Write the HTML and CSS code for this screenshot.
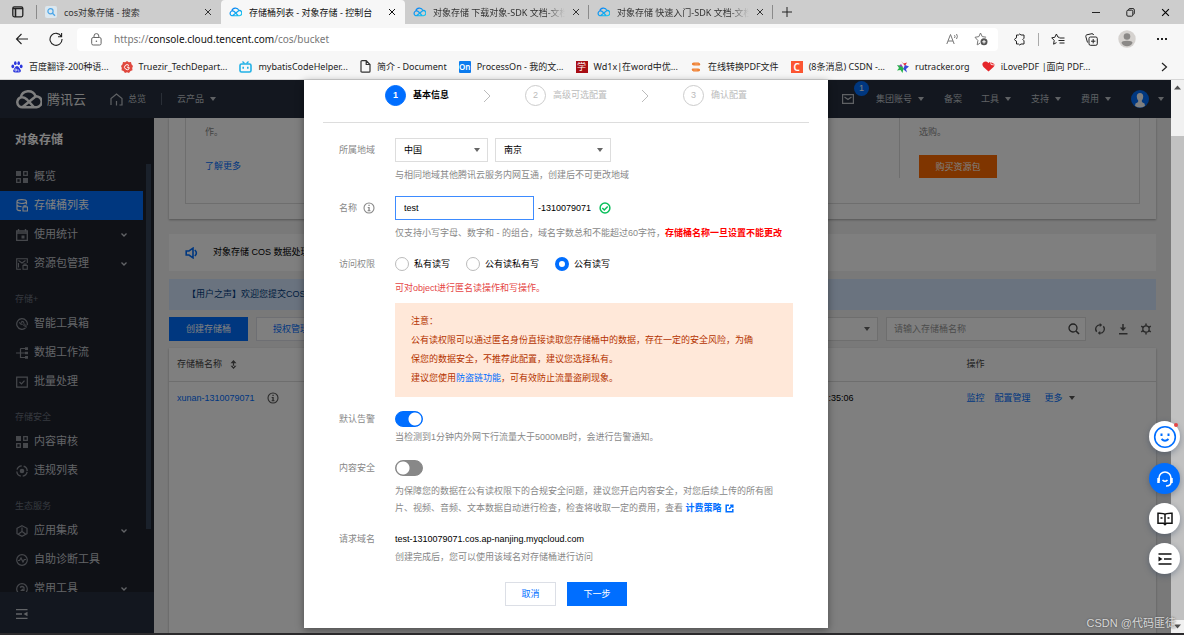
FILE: index.html
```html
<!DOCTYPE html>
<html lang="zh-CN">
<head>
<meta charset="utf-8">
<title>存储桶列表 - 对象存储 - 控制台</title>
<link rel="stylesheet" href="styles.css">
</head>
<body>
<svg class="defs" width="0" height="0" aria-hidden="true">
  <defs>
    <linearGradient id="cg" x1="0" y1="0" x2="1" y2="1"><stop offset="0" stop-color="#0a7cf5"/><stop offset="1" stop-color="#14c8ee"/></linearGradient>
    <symbol id="cloud" viewBox="0 0 26 18"><path d="M4 15.500a5 5 0 0 1 1.500-8.500a7.500 7.500 0 0 1 14.300-1.200a5 5 0 0 1 1 10.700H7a5 5 0 0 1-3-1zM6 7q3-.5 5.500 2L18 16M7 16.500 18 7.500q2-1.700 3.500-1.500" fill="none" stroke-width="2.400"/></symbol>
    <symbol id="chev" viewBox="0 0 8 8"><path d="M1.500 2.500 4 5l2.500-2.500" fill="none" stroke="currentColor" stroke-width="1.300"/></symbol>
    <symbol id="caret" viewBox="0 0 8 6"><path d="M1 1h6L4 5z" fill="currentColor"/></symbol>
    <symbol id="grid" viewBox="0 0 12 12"><path d="M0 0h5v5H0zM7 7h5v5H7z" fill="currentColor"/><path d="M7.700.7h3.600v3.600H7.700zM.7 7.700h3.600v3.600H.7z" fill="none" stroke="currentColor" stroke-width="1.300"/></symbol>
    <symbol id="info" viewBox="0 0 12 12"><circle cx="6" cy="6" r="5" fill="none" stroke="currentColor" stroke-width="1.100"/><path d="M5.400 2.700h1.300V4H5.400zM4.700 5h2v3.300h.8v.9H4.600v-.9h.8V5.900h-.7z" fill="currentColor"/></symbol>
    <symbol id="step" viewBox="0 0 8 14"><path d="m1 1 6 6-6 6" fill="none" stroke="#bbb"/></symbol>
    <symbol id="x" viewBox="0 0 8 8"><path d="m1 1 6 6M7 1 1 7" stroke="currentColor" stroke-width="1"/></symbol>
  </defs>
</svg>

<header class="browser">
  <div class="tabs">
    <button class="tab-menu" aria-label="标签页操作"><svg width="12" height="12" viewBox="0 0 12 12"><rect x=".8" y=".8" width="10" height="10" rx="1.500" fill="none" stroke="#222" stroke-width="1.300"/><path d="M1 2.500h10M3.500 3v8" stroke="#222" stroke-width="1.600"/></svg></button>
    <div class="tab">
      <svg width="12" height="12" viewBox="0 0 12 12"><rect width="12" height="12" rx="2" fill="#dbe7ef"/><circle cx="5.500" cy="5.200" r="2.600" fill="none" stroke="#4ca6e8" stroke-width="1.200"/><path d="m7.500 7.200 2.500 2.600" stroke="#4ca6e8" stroke-width="1.300"/></svg>
      <span class="tab-title">cos对象存储 - 搜索</span>
      <button aria-label="关闭"><svg width="8" height="8"><use href="#x"/></svg></button>
    </div>
    <div class="tab active">
      <svg width="13" height="10" stroke="url(#cg)"><use href="#cloud"/></svg>
      <span class="tab-title">存储桶列表 - 对象存储 - 控制台</span>
      <button aria-label="关闭"><svg width="8" height="8"><use href="#x"/></svg></button>
    </div>
    <div class="tab ruled">
      <svg width="13" height="10" stroke="url(#cg)"><use href="#cloud"/></svg>
      <span class="tab-title fade">对象存储 下载对象-SDK 文档-文档</span>
      <button aria-label="关闭"><svg width="8" height="8"><use href="#x"/></svg></button>
    </div>
    <div class="tab ruled">
      <svg width="13" height="10" stroke="url(#cg)"><use href="#cloud"/></svg>
      <span class="tab-title fade">对象存储 快速入门-SDK 文档-文档</span>
      <button aria-label="关闭"><svg width="8" height="8"><use href="#x"/></svg></button>
    </div>
    <button class="new-tab" aria-label="新标签页"><svg width="12" height="12" viewBox="0 0 12 12"><path d="M6 1v10M1 6h10" stroke="#222"/></svg></button>
    <div class="window-buttons">
      <button aria-label="最小化"><svg width="9" height="9" viewBox="0 0 9 9"><path d="M1 4.500h8" stroke="#222"/></svg></button>
      <button aria-label="还原"><svg width="9" height="9" viewBox="0 0 9 9"><rect x=".8" y="2.200" width="6" height="6" rx="1.200" fill="none" stroke="#222"/><path d="M2.700 2V1q.2-.4.800-.4h3.500q1.300 0 1.300 1.300V5.500q0 .8-1 .8" fill="none" stroke="#222"/></svg></button>
      <button aria-label="关闭窗口"><svg width="9" height="9"><use href="#x"/></svg></button>
    </div>
  </div>
  <div class="toolbar">
    <button aria-label="后退"><svg width="14" height="12" viewBox="0 0 14 12"><path d="M13 6H1.500M6.500 1l-5 5 5 5" fill="none" stroke="#222" stroke-width="1.100"/></svg></button>
    <button aria-label="刷新"><svg width="14" height="14" viewBox="0 0 14 14"><path d="M12.300 4.500A6 6 0 1 0 13 7M12.600 1v3.700H9" fill="none" stroke="#222" stroke-width="1.100"/></svg></button>
    <div class="address">
      <svg width="11" height="13" viewBox="0 0 11 13"><rect x=".7" y="4.500" width="9.400" height="7.500" rx="1.500" fill="none" stroke="#666"/><path d="M3 4.500V3a2.400 2.400 0 0 1 4.800 0v1.500" fill="none" stroke="#666"/><circle cx="5.400" cy="8.200" r=".8" fill="#666"/></svg>
      <span class="url">https://<b>console.cloud.tencent.com</b>/cos/bucket</span>
      <button aria-label="大声朗读"><svg width="13" height="12" viewBox="0 0 13 12"><path d="M.8 11 4.500 1.500 8.200 11M2 8h5M8.500 2.200q1 1.300 0 2.800M10.500 1q1.800 2.400 0 5" fill="none" stroke="#777"/></svg></button>
      <button aria-label="收藏"><svg width="14" height="14" viewBox="0 0 14 14"><path d="M6.500 1 8.200 4.600l3.900.6M4 12.500l-.8.300.7-4.300L1 5.300l3.900-.7L6.500 1M4 12.500 6 11" fill="none" stroke="#777"/><circle cx="10" cy="9.800" r="3.500" fill="#555"/><path d="M10 8v3.600M8.200 9.800h3.600" stroke="#fff"/></svg></button>
    </div>
    <div class="tools">
      <button aria-label="扩展"><svg width="13" height="13" viewBox="0 0 13 13"><path d="M3.500 2h2q1.200-2 2.500 0h3v3.200q-2.400 1.300 0 2.600V11H8q-1.300 2-2.500 0h-2V8.200Q-.5 6.500 3.500 4.800z" fill="none" stroke="#222" stroke-linejoin="round"/></svg></button>
      <i class="rule"></i>
      <button aria-label="收藏夹"><svg width="14" height="13" viewBox="0 0 14 13"><path d="M8.500 4.300 7 4.200 5.400 1 3.800 4.300.7 4.800l2.500 2.600-.6 3.800L5.500 9.600M8.500 5h5M7.500 7.500h6M8.500 10h5" fill="none" stroke="#222"/></svg></button>
      <button aria-label="集锦"><svg width="13" height="13" viewBox="0 0 13 13"><rect x="4" y="4" width="8.300" height="8.300" rx="1.500" fill="none" stroke="#222"/><path d="M8.200 6v4.400M6 8.200h4.400M2.500 9.500.8 3.500q-.2-1.300 1-1.700L7 .7q1.300 0 1.600 1.300" fill="none" stroke="#222"/></svg></button>
      <button aria-label="用户"><svg width="18" height="18" viewBox="0 0 18 18"><circle cx="9" cy="9" r="8.700" fill="#d5d2cf"/><circle cx="9" cy="6.500" r="3.300" fill="#8b8987"/><path d="M3.500 13q0-2.300 5.500-2.300t5.500 2.300q-2 3.300-5.500 3.300T3.500 13z" fill="#8b8987"/></svg></button>
      <button aria-label="更多"><svg width="12" height="4" viewBox="0 0 12 4"><path d="M1 1h2v2H1zM5 1h2v2H5zM9 1h2v2H9z" fill="#222"/></svg></button>
    </div>
  </div>
  <nav class="bookmarks">
    <a href="#"><svg width="12" height="12" viewBox="0 0 12 12" fill="#2a35dc"><ellipse cx="1.800" cy="5.400" rx="1.400" ry="1.800"/><ellipse cx="4.300" cy="2.200" rx="1.300" ry="1.900"/><ellipse cx="7.700" cy="2.200" rx="1.300" ry="1.900"/><ellipse cx="10.200" cy="5.400" rx="1.400" ry="1.800"/><path d="M6 5Q4.500 5 3.500 7T2 10q.5 2 4 1.500 3.500.5 4-1.500-.2-1-1.500-3T6 5z"/><path d="M4 8h1.500v2H4zM7 8v2h1.500" fill="none" stroke="#fff" stroke-width=".6"/></svg>百度翻译-200种语...</a>
    <a href="#"><svg width="12" height="12" viewBox="0 0 12 12"><path d="m6 0 1.800 1.200L10 1l.5 2.200L12 5l-.8 2 .3 2.200-2 .8L8 12l-2-.8L4 12 2.500 10l-2-.8L.8 7 0 5l1.500-1.800L2 1l2.200.2z" fill="#e0483e"/><path d="M8 4.500Q6 2.500 4.200 4.500T4.500 8Q6.500 9.500 8 8V6.200H6" fill="none" stroke="#fff"/></svg>Truezir_TechDepart...</a>
    <a href="#"><svg width="13" height="12" viewBox="0 0 13 12"><path d="m3.500.5 2 2M9.500.5l-2 2" stroke="#21b1e6" stroke-width="1.300"/><rect x="1" y="3" width="11" height="8" rx="1.500" fill="none" stroke="#21b1e6" stroke-width="1.600"/><path d="M4.200 5.800v2M8.800 5.800v2" stroke="#21b1e6" stroke-width="1.600"/></svg>mybatisCodeHelper...</a>
    <a href="#"><svg width="11" height="13" viewBox="0 0 11 13"><path d="M1 1.500Q1 .7 2 .7h4.200L10 4.500v6.700q0 1-1 1H2q-1 0-1-1zM6.200.7v3.800H10" fill="none" stroke="#333" stroke-width="1.200"/></svg>简介 - Document</a>
    <a href="#"><span class="fav fav-on">On</span>ProcessOn - 我的文...</a>
    <a href="#"><span class="fav fav-xue">学</span>Wd1x|在word中优...</a>
    <a href="#"><svg width="12" height="12" viewBox="0 0 12 12"><path d="M9.800 4H4q-1.800 0-1.800-1Q2.200 2 4 2h4.500q1.300 0 1.300 2zM2.200 8H8q1.800 0 1.800 1Q9.800 10 8 10H3.500q-1.300 0-1.300-2z" fill="#ef7d2c" stroke="#ef7d2c" stroke-linejoin="round"/><path d="M4.500 3h4M3.500 9h4" stroke="#f9b98c" stroke-width=".7"/></svg>在线转换PDF文件</a>
    <a href="#"><span class="fav fav-c">C</span>(8条消息) CSDN -...</a>
    <a href="#"><svg width="12" height="12" viewBox="0 0 12 12"><path d="m4 0 2.500 2.500L10 1.500 8 5z" fill="#e5303c"/><path d="m8 4 4 1.500-3 2.500 1 3.500L6 8z" fill="#3b49d8"/><path d="M6.500 7.500 5.500 12 3.500 9 0 9.500 2 7 0 4l5 1z" fill="#27b34b"/><path d="M4 3 6 6 2 5z" fill="#9d37b4"/></svg>rutracker.org</a>
    <a href="#"><svg width="13" height="11" viewBox="0 0 13 11"><path d="M6.500 10.500 1.500 6Q-.8 3 1.500 1.200 4-.3 6.500 2L8 .8 12.300 3q.7 1.700-.8 3z" fill="#e5262a"/><path d="m8.500 0 .5 3.500 3.500.5" fill="none" stroke="#fff" stroke-width=".8"/></svg>iLovePDF |面向 PDF...</a>
    <button class="more" aria-label="更多书签"><svg width="7" height="10" viewBox="0 0 7 10"><path d="m1 1 4.500 4L1 9" fill="none" stroke="#222" stroke-width="1.200"/></svg></button>
  </nav>
</header>

<div class="viewport">
  <div class="page">
    <header class="topnav">
      <svg class="brand-mark" width="27" height="19" stroke="#fff"><use href="#cloud"/></svg>
      <strong class="brand">腾讯云</strong>
      <a class="home" href="#"><svg width="13" height="13" viewBox="0 0 13 13"><path d="M1 12V5.500L6.500 1 12 5.500V12H9.500M6.500 8v4.500" fill="none" stroke="currentColor" stroke-width="1.200"/></svg>总览</a>
      <i class="rule"></i>
      <a class="products" href="#">云产品<svg width="8" height="6"><use href="#caret"/></svg></a>
      <nav class="account">
        <a class="mail" href="#" aria-label="消息"><svg width="12" height="10" viewBox="0 0 12 10"><path d="M.6.600h10.800v8.800H.6zM2.500 3 6 5.500 9.500 3" fill="none" stroke="currentColor" stroke-width="1.200"/></svg><span class="badge">1</span></a>
        <a href="#">集团账号<svg width="8" height="6"><use href="#caret"/></svg></a>
        <a href="#">备案</a>
        <a href="#">工具<svg width="8" height="6"><use href="#caret"/></svg></a>
        <a href="#">支持<svg width="8" height="6"><use href="#caret"/></svg></a>
        <a href="#">费用<svg width="8" height="6"><use href="#caret"/></svg></a>
        <a class="me" href="#" aria-label="账号"><svg width="18" height="18" viewBox="0 0 18 18"><circle cx="9" cy="9" r="9" fill="#006eff"/><path d="M9 3Q5.500 3.200 5.800 7q.2 2.500 1.600 4Q7 12.500 4.500 13.500L4 16q5 3 10 0l-.5-2.500Q11 12.500 10.600 11q1.400-1.500 1.600-4Q12.500 3.200 9 3z" fill="#fff"/></svg><svg width="8" height="6"><use href="#caret"/></svg></a>
      </nav>
    </header>
    <div class="body">
      <aside class="sidebar">
        <h2>对象存储</h2>
        <div class="menu">
          <nav>
            <a href="#"><svg width="12" height="12"><use href="#grid"/></svg>概览</a>
            <a class="current" href="#"><svg width="12" height="13" viewBox="0 0 12 13"><path d="M10.500 5.500V2.500q0-1.800-4.700-1.800T1 2.500v7.700q0 1.300 4 1.500M1 2.800q1 1.700 4.800 1.700t4.700-1.700M1 6.200q1 1.500 4.500 1.500" fill="none" stroke="currentColor" stroke-width="1.200"/><path d="M7 8h4.500v4H7zM8 8V6.700h2V8" fill="none" stroke="currentColor" stroke-width="1.100"/></svg>存储桶列表</a>
            <a href="#"><svg width="12" height="12" viewBox="0 0 12 12"><path d="M.7 2h10.600v9.300H.7zM.7 4h10.600" fill="none" stroke="currentColor" stroke-width="1.300"/><path d="M2.500 0v2.500M9.500 0v2.500" stroke="currentColor" stroke-width="1.400"/><path d="M5.500 6.500h3v3h-3z" fill="currentColor"/></svg>使用统计<svg class="down" width="8" height="8"><use href="#chev"/></svg></a>
            <a href="#"><svg width="12" height="12" viewBox="0 0 12 12"><path d="M5 11.300H.7V.7h10.600V5M2.500 2.500 6 5l3.500-2.500M2.500 5v4.500M7 7.500h4.300v3.800H7zM8 7.500V6h2v1.500" fill="none" stroke="currentColor" stroke-width="1.100"/></svg>资源包管理<svg class="down" width="8" height="8"><use href="#chev"/></svg></a>
          </nav>
          <h3>存储+</h3>
          <nav>
            <a href="#"><svg width="12" height="12" viewBox="0 0 12 12"><path d="M9.500 10A5.300 5.300 0 1 1 11.200 7.200" fill="none" stroke="currentColor" stroke-width="1.200"/><path d="m10.500 9.500-4-3.200Q4 7 3.500 4.500l1.300.8L6 4.500l-.3-1.300Q8.500 3 7.800 5.500L11 8.500" fill="none" stroke="currentColor"/></svg>智能工具箱</a>
            <a href="#"><svg width="12" height="12" viewBox="0 0 12 12"><path d="M0 6h9M4.500 1.500V10.500H9M4.500 1.500H9" fill="none" stroke="currentColor" stroke-width="1.200"/><path d="M9 .3h3v2.600H9zM9 4.700h3v2.600H9zM9 9.100h3v2.600H9z" fill="currentColor"/></svg>数据工作流</a>
            <a href="#"><svg width="12" height="12" viewBox="0 0 12 12"><path d="M.7 1.200h10.600v10H.7zM3.500 6l2 2 3-3.300" fill="none" stroke="currentColor" stroke-width="1.200"/></svg>批量处理</a>
          </nav>
          <h3>存储安全</h3>
          <nav>
            <a href="#"><svg width="12" height="12"><use href="#grid"/></svg>内容审核</a>
            <a href="#"><svg width="12" height="12" viewBox="0 0 12 12"><circle cx="6" cy="6" r="5.200" fill="none" stroke="currentColor" stroke-width="1.300" stroke-dasharray="6.200 2" stroke-dashoffset="-1"/><circle cx="6" cy="6" r="2.300" fill="currentColor"/></svg>违规列表</a>
          </nav>
          <h3>生态服务</h3>
          <nav>
            <a href="#"><svg width="12" height="12" viewBox="0 0 12 12"><path d="m6 .7 5 2.600v5.400l-5 2.600-5-2.600V3.300zM6 2.500V6.500L2.500 9M6 6.500 9.500 9" fill="none" stroke="currentColor" stroke-width="1.200"/></svg>应用集成<svg class="down" width="8" height="8"><use href="#chev"/></svg></a>
            <a href="#"><svg width="12" height="12" viewBox="0 0 12 12"><circle cx="6" cy="6" r="5.300" fill="none" stroke="currentColor" stroke-width="1.200"/><path d="M2 6.500h1.500L5 4l2 4 1.300-2.500H10" fill="none" stroke="currentColor" stroke-width="1.200"/></svg>自助诊断工具</a>
            <a href="#"><svg width="12" height="12" viewBox="0 0 12 12"><circle cx="6" cy="6" r="5.300" fill="none" stroke="currentColor" stroke-width="1.200"/><path d="M4 4.500q2-2 4 0v3H5.500L7 6" fill="none" stroke="currentColor" stroke-width="1.200"/></svg>常用工具<svg class="down" width="8" height="8"><use href="#chev"/></svg></a>
          </nav>
        </div>
        <footer><button aria-label="收起菜单"><svg width="12" height="10" viewBox="0 0 12 10"><path d="M0 .7h11.500M0 5h6M0 9.300h11.500" stroke="currentColor" stroke-width="1.300"/><path d="M11.500 2.700v4.600L7.500 5z" fill="currentColor"/></svg></button></footer>
      </aside>
      <main class="content">
        <section class="intro card">
          <div class="intro-inner">
            <div class="intro-col first"><p>如，您可通过控制台、<br>作。</p><a href="#">了解更多</a></div>
            <div class="intro-col usage"><p>的使用状态，<br>&nbsp;</p></div>
            <div class="intro-col last"><p>套餐，购买量身资费更优惠，可以根据实际需求<br>选购。</p><button class="buy">购买资源包</button></div>
          </div>
        </section>
        <section class="announce"><svg width="14" height="12" viewBox="0 0 14 12"><path d="M1.200 4H4l4-2.800v9.600L4 8H1.200z" fill="none" stroke="#006eff" stroke-width="1.600"/><path d="M9.800 3q3.200 3 0 6" fill="none" stroke="#006eff" stroke-width="1.600"/></svg>对象存储 COS 数据处理</section>
        <section class="voice">【用户之声】欢迎您提交COS</section>
        <div class="actions">
          <button class="primary">创建存储桶</button>
          <button class="plain">授权管理</button>
          <div class="filter"><select aria-label="筛选"><option></option></select><svg width="8" height="6"><use href="#caret"/></svg></div>
          <div class="search"><input type="text" aria-label="搜索" placeholder="请输入存储桶名称"><svg width="12" height="12" viewBox="0 0 12 12"><circle cx="5" cy="5" r="4" fill="none" stroke="currentColor" stroke-width="1.300"/><path d="m8 8 3 3" stroke="currentColor" stroke-width="1.600"/></svg></div>
          <div class="icon-buttons">
            <button aria-label="刷新"><svg width="12" height="12" viewBox="0 0 12 12"><path d="M2.700 8.800A4.200 4.200 0 0 1 6.500 1.900M9.300 3.200a4.200 4.200 0 0 1-3.800 6.900" fill="none" stroke="currentColor" stroke-width="1.300"/><path d="M5.800 0 8.200 2 5.800 4zM6.200 8 3.800 10l2.400 2z" fill="currentColor"/></svg></button>
            <button aria-label="下载"><svg width="10" height="12" viewBox="0 0 10 12"><path d="M5 1v5M1 10.700h8.500" stroke="currentColor" stroke-width="1.500"/><path d="M1.800 4.500h6.400L5 8z" fill="currentColor"/></svg></button>
            <button aria-label="设置"><svg width="12" height="12" viewBox="0 0 12 12"><circle cx="6" cy="6" r="3.200" fill="none" stroke="currentColor" stroke-width="1.300"/><path d="M6 .5v2.300M6 9.200v2.300M1.200 3.200l2 1.200M8.800 7.600l2 1.200M1.200 8.800l2-1.200M8.800 4.400l2-1.200" stroke="currentColor" stroke-width="1.500"/></svg></button>
          </div>
        </div>
        <section class="card buckets">
          <table>
            <thead><tr><th class="c-name">存储桶名称<svg width="7" height="9" viewBox="0 0 7 9"><path d="M3.500 0 6.500 3.300h-6zM3.500 9l3-3.300h-6zM2.900 2h1.200v5H2.900z" fill="currentColor"/></svg></th><th class="c-time"></th><th>操作</th></tr></thead>
            <tbody><tr><td><a href="#">xunan-1310079071</a><svg width="12" height="12"><use href="#info"/></svg></td><td>:35:06</td><td><a href="#">监控</a><a href="#">配置管理</a><a href="#">更多</a><svg class="more-caret" width="8" height="6"><use href="#caret"/></svg></td></tr></tbody>
          </table>
        </section>
      </main>
    </div>

    <div class="overlay">
      <section class="dialog" role="dialog" aria-label="创建存储桶">
        <ol class="steps">
          <li class="on"><span>1</span>基本信息</li>
          <li class="sep"><svg width="8" height="14"><use href="#step"/></svg></li>
          <li><span>2</span>高级可选配置</li>
          <li class="sep"><svg width="8" height="14"><use href="#step"/></svg></li>
          <li><span>3</span>确认配置</li>
        </ol>
        <form>
          <div class="row">
            <label class="label tall" for="country">所属地域</label>
            <div>
              <div class="line">
                <div class="pick"><select id="country"><option>中国</option></select><svg width="8" height="6"><use href="#caret"/></svg></div>
                <div class="pick wide"><select aria-label="城市"><option>南京</option></select><svg width="8" height="6"><use href="#caret"/></svg></div>
              </div>
              <p class="help gap">与相同地域其他腾讯云服务内网互通，创建后不可更改地域</p>
            </div>
          </div>
          <div class="row">
            <label class="label tall" for="name">名称<svg width="12" height="12"><use href="#info"/></svg></label>
            <div>
              <div class="line name-line">
                <input id="name" class="name" type="text" value="test">
                <span>-1310079071</span>
                <svg class="ok" width="12" height="12" viewBox="0 0 12 12"><circle cx="6" cy="6" r="4.900" fill="none" stroke="#0abf5b" stroke-width="1.500"/><path d="m3.300 6 2 2 3.400-3.500" fill="none" stroke="#0abf5b" stroke-width="1.500"/></svg>
              </div>
              <p class="help gap">仅支持小写字母、数字和 - 的组合，域名字数总和不能超过60字符，<b>存储桶名称一旦设置不能更改</b></p>
            </div>
          </div>
          <div class="row">
            <span class="label">访问权限</span>
            <div>
              <div class="radios">
                <label><input type="radio" name="acl">私有读写</label>
                <label><input type="radio" name="acl">公有读私有写</label>
                <label><input type="radio" name="acl" checked>公有读写</label>
              </div>
              <p class="help gap danger">可对object进行匿名读操作和写操作。</p>
              <div class="notice">注意：<br>公有读权限可以通过匿名身份直接读取您存储桶中的数据，存在一定的安全风险，为确<br>保您的数据安全，不推荐此配置，建议您选择私有。<br>建议您使用<a href="#">防盗链功能</a>，可有效防止流量盗刷现象。</div>
            </div>
          </div>
          <div class="row">
            <label class="label" for="alarm">默认告警</label>
            <div>
              <div class="switch-line"><input id="alarm" class="switch" type="checkbox" checked></div>
              <p class="help">当检测到1分钟内外网下行流量大于5000MB时，会进行告警通知。</p>
            </div>
          </div>
          <div class="row">
            <label class="label" for="safe">内容安全</label>
            <div>
              <div class="switch-line"><input id="safe" class="switch" type="checkbox"></div>
              <p class="help gap">为保障您的数据在公有读权限下的合规安全问题，建议您开启内容安全，对您后续上传的所有图<br>片、视频、音频、文本数据自动进行检查，检查将收取一定的费用，查看 <a class="pricing" href="#">计费策略<svg width="9" height="9" viewBox="0 0 9 9"><path d="M4 1.200H1.200v6.600h6.600V5M5.200 1.200h2.600v2.600M7.800 1.200 4 5" fill="none" stroke="#006eff" stroke-width="1.500"/></svg></a></p>
            </div>
          </div>
          <div class="row">
            <span class="label">请求域名</span>
            <div>
              <div class="domain">test-1310079071.cos.ap-nanjing.myqcloud.com</div>
              <p class="help">创建完成后，您可以使用该域名对存储桶进行访问</p>
            </div>
          </div>
          <div class="buttons">
            <button type="button" class="plain cancel">取消</button>
            <button type="button" class="primary next">下一步</button>
          </div>
        </form>
      </section>
    </div>
  </div>
  <div class="scrollbar" aria-hidden="true">
    <svg width="7" height="5" viewBox="0 0 7 5"><path d="M0 4.500h7L3.500.5z" fill="#505050"/></svg>
    <div class="thumb"></div>
    <svg width="7" height="5" viewBox="0 0 7 5"><path d="M0 .5h7L3.500 4.500z" fill="#505050"/></svg>
  </div>
  <div class="floaters">
    <button aria-label="反馈"><svg width="24" height="24" viewBox="0 0 24 24" fill="none" stroke="#006eff"><circle cx="12" cy="12" r="10.300" stroke-width="1.600"/><path d="M8.500 8.500v2.500M15.500 8.500v2.500" stroke-width="2"/><path d="M8.500 14q3.500 3.500 7 0" stroke-width="1.800"/></svg><i class="dot"></i></button>
    <button class="blue" aria-label="客服"><svg width="18" height="18" viewBox="0 0 18 18" fill="none" stroke="#fff"><path d="M3 11V8a6 6 0 0 1 12 0v4q0 4-5 4" stroke-width="1.600"/><path d="M2.500 8v5M15.500 8v5" stroke-width="2.500"/><path d="M6.500 10q2.500 2.500 5 0" stroke-width="1.600"/></svg></button>
    <button aria-label="文档"><svg width="16" height="14" viewBox="0 0 16 14" fill="none" stroke="#111" stroke-width="1.500"><path d="M8 2.500Q7 1 1 1.200v10H6.500L8 12.700 9.500 11.200H15v-10Q9 1 8 2.500zV12"/><path d="M3.500 6h2M10.500 6h2"/></svg></button>
    <button aria-label="展开"><svg width="14" height="12" viewBox="0 0 14 12"><path d="M.5 1h13M6 6h7.500M.5 11h13" stroke="#111" stroke-width="1.500"/><path d="M.5 3.500v5L4.500 6z" fill="#111"/></svg></button>
  </div>
  <div class="watermark">CSDN @代码匪徒</div>
</div>
</body>
</html>
```

FILE: styles.css
```css
* { box-sizing: border-box; }

body {
  margin: 0;
  height: 100vh;
  display: flex;
  flex-direction: column;
  overflow: hidden;
  border-bottom: 2px solid #2b2a2c;
  font: 9px/17px "Liberation Sans", "Noto Sans CJK SC", sans-serif;
  color: #000;
}

svg { display: block; flex: none; }
.defs { position: absolute; }
a { color: #006eff; text-decoration: none; }
p, h2, h3, ol { margin: 0; padding: 0; }
button, input, select { font: inherit; color: inherit; margin: 0; }
button { border: 0; padding: 0; background: none; display: flex; align-items: center; justify-content: center; white-space: nowrap; }
select { appearance: none; }

/* browser frame */
.browser { background: #f7f7f7; font-family: "Noto Sans", "Noto Sans CJK SC", sans-serif; border-bottom: 1px solid #d6d6d6; }
.tabs { display: flex; height: 24px; background: #cdcdcd; padding-right: 4px; }
.tab-menu { width: 37px; border-right: 1px solid #8a8a8a; height: 14px; align-self: center; }
.tab { width: 184px; display: flex; align-items: center; gap: 7px; padding: 0 9px 0 8px; color: #333; }
.tab.active { background: #f7f7f7; border-radius: 4px 4px 0 0; color: #111; }
.tab.ruled { background: linear-gradient(#8a8a8a, #8a8a8a) right center / 1px 14px no-repeat; }
.tab-title { flex: 1; overflow: hidden; white-space: nowrap; }
.fade { mask-image: linear-gradient(90deg, #000 85%, transparent); }
.new-tab { width: 28px; }
.window-buttons { margin-left: auto; display: flex; gap: 26px; padding-right: 10px; }
.toolbar { display: flex; align-items: center; height: 30px; padding: 0 16px 0 15px; gap: 20px; }
.address { flex: 1; height: 23px; margin-left: -6px; background: #fff; border-radius: 4px; display: flex; align-items: center; padding: 0 10px 0 14px; gap: 12px; }
.url { flex: 1; font-size: 10px; color: #777; }
.url b { font-weight: 400; color: #111; }
.address button + button { margin-left: 3px; }
.tools { display: flex; align-items: center; gap: 20px; margin-left: -5px; }
.tools .rule { width: 1px; height: 13px; background: #aaa; margin: 0 -8px; }
.bookmarks { display: flex; align-items: center; height: 25px; padding: 0 16px 0 11px; gap: 12px; }
.bookmarks a { display: flex; align-items: center; gap: 6px; color: #222; white-space: nowrap; }
.fav { width: 12px; height: 12px; line-height: 12px; color: #fff; text-align: center; }
.fav-on { background: #0b7bee; font-weight: 600; font-size: 8px; border-radius: 1px; }
.fav-xue { background: #a80d14; }
.fav-c { background: #fc5531; font-size: 10px; font-weight: 600; }
.more { margin-left: auto; }

/* page area */
.viewport { flex: 1; min-height: 0; display: flex; position: relative; }
.page { flex: 1; min-width: 0; display: flex; flex-direction: column; position: relative; }
.topnav { height: 38px; flex: none; background: #262f3e; color: #bfc3c9; display: flex; align-items: center; padding: 0 6px 0 15px; }
.topnav a { color: inherit; display: flex; align-items: center; gap: 5px; }
.brand { font-size: 13px; font-weight: 400; margin-left: 5px; color: #e8e8e8; }
.topnav .home { margin-left: 24px; }
.topnav .rule { width: 1px; height: 12px; background: #555f6e; margin: 0 15px; }
.account { margin-left: auto; display: flex; align-items: center; gap: 19px; }
.topnav .mail { position: relative; margin-right: 3px; }
.badge { position: absolute; left: 12px; top: -13px; width: 15px; height: 15px; line-height: 15px; border-radius: 50%; background: #006eff; color: #fff; text-align: center; }
.topnav .me { gap: 8px; }

.body { flex: 1; min-height: 0; display: flex; }
.sidebar { width: 154px; flex: none; display: flex; flex-direction: column; background: #1e222d; color: #c5c8ce; }
.sidebar h2 { font-size: 12px; line-height: 20px; color: #fff; padding: 12px 15px; }
.menu { flex: 1; min-height: 0; overflow: hidden; margin-right: 3px; padding-right: 8px; background: linear-gradient(#354257, #354257) right 2px / 5px 365px no-repeat; }
.menu a { display: flex; align-items: center; height: 29px; gap: 6px; padding: 0 15px 0 16px; color: #c5c8ce; font-size: 11px; }
.menu a > svg:first-child { color: #8c9098; }
.menu .down { margin-left: auto; }
.menu .current { background: #006eff; color: #fff; }
.menu .current > svg:first-child { color: #fff; }
.menu h3 { font-size: 9px; font-weight: 400; line-height: 20px; padding: 11px 15px 0; color: #6c727e; }
.sidebar footer { height: 41px; flex: none; background: #262f3e; display: flex; align-items: center; padding: 2px 16px 0; }

.content { flex: 1; min-width: 0; background: #f2f2f2; padding: 0 15px; display: flex; flex-direction: column; overflow: hidden; }
.card { background: #fff; box-shadow: 0 1px 2px rgba(0, 0, 0, .3); }
.intro { height: 101px; flex: none; display: flex; flex-direction: column; justify-content: flex-end; padding: 0 16px 15px; overflow: hidden; clip-path: inset(0 -4px -4px); }
.intro-inner { border: 1px solid #ddd; display: flex; padding-bottom: 25px; color: #888; line-height: 20px; }
.intro-col { padding-left: 19px; }
.intro-col p { white-space: nowrap; }
.intro-col a { display: block; margin-top: 14px; line-height: 20px; }
.first { flex: 1; }
.usage { width: 96px; }
.last { width: 240px; padding-left: 19px; border-left: 1px solid #ddd; }
.buy { width: 78px; height: 23px; margin-top: 13px; background: #ff6a00; color: #fff; }
.announce { height: 37px; flex: none; margin-top: 15px; background: #fff; display: flex; align-items: center; gap: 14px; padding: 0 16px; }
.voice { height: 31px; flex: none; margin-top: 8px; padding: 0 18px; line-height: 31px; background: #d5e7ff; color: #003b80; }
.actions { display: flex; margin: 7px 0; gap: 8px; color: #444; flex: none; }
.primary { height: 24px; padding: 0 16px; background: #006eff; color: #fff; }
.plain { height: 24px; padding: 0 16px; background: #fff; border: 1px solid #dcdfe6; color: #006eff; }
.actions .primary { width: 79px; }
.filter, .pick { position: relative; width: 178px; }
.filter { margin-left: auto; }
.filter select, .pick select { width: 100%; height: 24px; padding: 0 8px; border: 1px solid #ddd; border-radius: 0; background: #fff; }
.filter svg, .pick svg { position: absolute; right: 7px; top: 9px; color: #666; pointer-events: none; }
.search { width: 200px; height: 24px; display: flex; align-items: center; background: #fff; border: 1px solid #ddd; padding: 0 5px 0 7px; }
.search input { flex: 1; min-width: 0; border: 0; padding: 0; background: none; }
.search input::placeholder { color: #999; }
.icon-buttons { display: flex; gap: 12px; padding: 0 4px 0 0; color: #555; }
.buckets { flex: 1; }
table { width: 100%; border-collapse: collapse; table-layout: fixed; }
th, td { text-align: left; padding: 0 8px; vertical-align: middle; }
th { height: 33px; border-bottom: 1px solid #ddd; color: #444; font-weight: 400; }
td { height: 34px; }
.c-name { width: 66%; }
.c-time { width: 14%; }
table svg { display: inline-block; vertical-align: middle; margin-left: 8px; color: #555; }
td a + a { margin-left: 10px; }
td a + a + a { margin-left: 14px; }
td svg { margin-left: 12px; }
table .more-caret { margin-left: 5px; }

/* dialog */
.overlay { position: absolute; inset: 0; background: rgba(0, 0, 0, .5); display: flex; justify-content: center; align-items: flex-start; padding-right: 39px; }
.dialog { width: 524px; background: #fff; box-shadow: 0 2px 8px rgba(0, 0, 0, .4); padding-bottom: 22px; }
.steps { list-style: none; display: flex; justify-content: center; gap: 34px; height: 43px; padding-bottom: 11px; margin: 0 19px; border-bottom: 1px solid #ddd; color: #bbb; }
.steps li { display: flex; align-items: center; gap: 7px; }
.steps span { width: 21px; height: 21px; line-height: 19px; text-align: center; border: 1px solid #ccc; border-radius: 50%; }
.steps .on { color: #000; font-weight: 700; }
.steps .on span { background: #006eff; border-color: #006eff; color: #fff; }
form { padding: 15px 35px 0; display: flex; flex-direction: column; gap: 12px; }
.row { display: grid; grid-template-columns: 56px minmax(0, 1fr); }
.label { color: #888; line-height: 20px; display: flex; align-items: center; gap: 6px; height: 20px; }
.label.tall { height: 24px; }
.line { display: flex; align-items: center; gap: 7px; }
.pick { width: 93px; }
.pick.wide { width: 116px; }
.name-line { gap: 4px; }
.name { width: 139px; height: 24px; padding: 0 8px; border: 1px solid #3d8bff; outline: 0; }
.name-line .ok { margin-left: 4px; }
.help { color: #888; white-space: nowrap; }
.help.gap { margin-top: 5px; }
.help b { color: #f00; }
.help.danger { color: #e54545; margin-top: 6px; }
.radios { display: flex; gap: 16px; height: 20px; }
.radios label { display: flex; align-items: center; gap: 5px; }
.radios input { appearance: none; width: 14px; height: 14px; border: 1px solid #bbb; border-radius: 50%; background: #fff; }
.radios input:checked { border: 4px solid #006eff; }
.notice { margin-top: 6px; padding: 9px 16px; background: #ffe8d9; color: #b43300; line-height: 19px; white-space: nowrap; }
.switch-line { display: flex; align-items: center; height: 20px; }
.switch { appearance: none; width: 28px; height: 16px; border-radius: 8px; border: 1px solid #888; background: radial-gradient(circle at 7px 7px, #fff 6px, #888 7px); }
.switch:checked { border-color: #006eff; background: radial-gradient(circle at 19px 7px, #fff 6px, #006eff 7px); }
.pricing { display: inline-flex; align-items: center; gap: 3px; font-weight: 700; vertical-align: top; }
.domain { line-height: 20px; }
.buttons { display: flex; justify-content: center; gap: 11px; margin-top: 4px; }
.cancel { width: 51px; }
.next { width: 60px; }

/* page edge */
.scrollbar { width: 13px; background: #f1f1f1; display: flex; flex-direction: column; align-items: center; padding: 5px 0 4px; gap: 4px; }
.thumb { flex: 1; align-self: stretch; margin-top: 42px; background: #c1c1c1; }
.floaters { position: absolute; right: 4px; bottom: 59px; display: flex; flex-direction: column; gap: 9px; }
.floaters button { position: relative; width: 31px; height: 31px; border-radius: 50%; background: #fff; box-shadow: 0 2px 6px rgba(40, 60, 90, .4); }
.floaters .blue { background: #006eff; margin-top: 2px; }
.dot { position: absolute; right: 2px; top: 2px; width: 4px; height: 4px; border-radius: 50%; background: #e54545; }
.watermark { position: absolute; right: 8px; bottom: 1px; font-size: 11px; color: #d8d8d8; text-shadow: 0 0 2px #444; }
```
